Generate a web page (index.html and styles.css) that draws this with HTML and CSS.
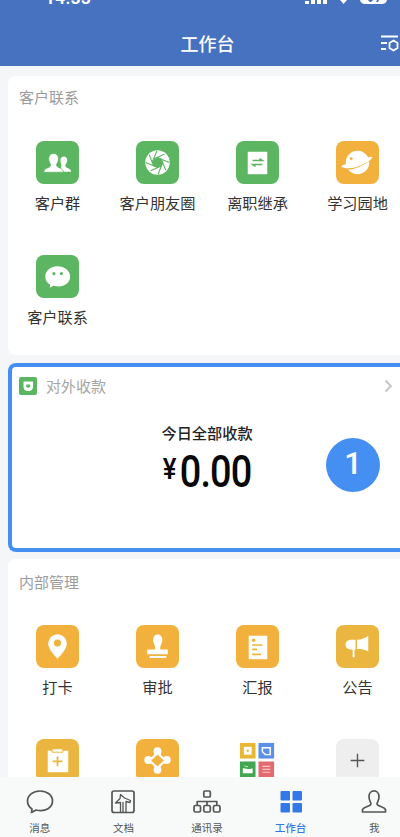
FILE: index.html
```html
<!DOCTYPE html>
<html lang="zh-CN">
<head>
<meta charset="utf-8">
<title>工作台</title>
<link rel="stylesheet" href="styles.css">
</head>
<body>
<div class="app">
  <header class="header">
    <div class="status">
      <span class="time">14:33</span>
      <svg class="signals" width="84" height="6" viewBox="0 0 84 6" fill="#fff"><path d="M0 1h4v3H0zM6 0h4v4H6zM12 0h4v4h-4zM18 0h4v4h-4zM35 0h7l-3.500 4z"/><path d="M55 0h27q-1 4-5 4H60q-4 0-5-4z"/><path d="M63 0h5q-1 2-2.500 2T63 0zM72 0h2l-1 2h-2z" fill="#4672c0"/></svg>
    </div>
    <div class="titlebar">
      <h1 class="title">工作台</h1>
      <svg class="settings" width="20" height="17" viewBox="0 0 20 17" fill="none" stroke="#fff" stroke-width="1.800"><path d="M1 1.500h17M1 8h6M1 14h5"/><path d="M13.500 5.500l4 2.500v5l-4 2.500-4-2.500V8z" stroke-linejoin="round"/></svg>
    </div>
  </header>

  <main class="content">
    <section class="card contacts">
      <h2 class="heading">客户联系</h2>
      <div class="grid">
        <div class="item"><div class="tile green"><svg viewBox="0 0 44 44"><g fill="#fff"><path d="M25 31.500h11c0-4-5-3-6-6 0-2 2-3 2-6 0-5-7-5-7 0 0 3 1 4 1 6z"/><path d="M8 32c0-5 6-4 7-7 0-2-2-3-2-7 0-7 10-7 10 0 0 4-2 5-2 7 1 3 7 2 7 7z" stroke="#5bb561" stroke-width=".8"/></g></svg></div><span>客户群</span></div>
        <div class="item"><div class="tile green"><svg viewBox="0 0 44 44"><circle cx="22" cy="22" r="12.500" fill="#fff"/><path d="M22 17l4 1.500 1.500 4-1.500 3-4 1.500-4-1.500-1.500-4 1.500-3z" fill="#5bb561"/><path d="M18 18.500l11-5M22 17l12 5M26 18.500l4.500 11.500M27.500 22l-5 12M26 25.500l-11 5M22 27l-12-5M18 25.500L13.500 14M16.500 22l5-12" stroke="#5bb561" stroke-width="1.100"/></svg></div><span>客户朋友圈</span></div>
        <div class="item"><div class="tile green"><svg viewBox="0 0 44 44"><path fill="#fff" d="M12 11h20v23H12z"/><path d="M17 20h10l-3-2M27 24H17l3 2" fill="none" stroke="#5bb561" stroke-width="1.600"/></svg></div><span>离职继承</span></div>
        <div class="item"><div class="tile orange"><svg viewBox="0 0 44 44"><circle cx="22" cy="22" r="12" fill="#fff"/><path d="M8 28.500Q20 30 35 19" fill="none" stroke="#f3b03b" stroke-width="1.600"/><path d="M11 23.500c-4 1-6 2-5 3 7 4 24-1 31-9 1-2-2-1.500-6 0-5 4-14 8-20 6z" fill="#fff"/><circle cx="15.500" cy="18" r="1.500" fill="#f3b03b"/></svg></div><span>学习园地</span></div>
        <div class="item"><div class="tile green"><svg viewBox="0 0 44 44"><path d="M22 11.500c-7 0-12.500 4.500-12.500 10.500 0 4 2 6.500 5 8.500l-.5 3 4-2c11 3 17-4 17-9.500 0-6-6-10.500-13-10.500z" fill="#fff"/><circle cx="18.300" cy="19" r="1.600" fill="#5bb561"/><circle cx="26" cy="19" r="1.600" fill="#5bb561"/></svg></div><span>客户联系</span></div>
      </div>
    </section>

    <section class="card payment">
      <div class="payhead">
        <svg width="18" height="18" viewBox="0 0 18 18"><rect width="18" height="18" rx="2" fill="#5bb561"/><path d="M4.500 4.500h9.500v5q0 4.500-4.700 4.500t-4.800-4.500z" fill="#fff"/><path d="M7.200 7.500h4v2q-2 2.500-4 0z" fill="#5bb561"/></svg>
        <h2 class="heading">对外收款</h2>
        <svg class="chevron" width="9" height="14" viewBox="0 0 9 14" fill="none" stroke="#c4c4c4" stroke-width="1.800"><path d="M1.500 1.500L7 7l-5.500 5.500"/></svg>
      </div>
      <div class="paylabel">今日全部收款</div>
      <div class="amount"><span class="yen">¥</span><span class="sum">0.00</span></div>
      <div class="marker">1</div>
    </section>

    <section class="card internal">
      <h2 class="heading">内部管理</h2>
      <div class="grid">
        <div class="item"><div class="tile orange"><svg viewBox="0 0 44 44"><path d="M22 34.500c-4-4-9.500-10-9.500-15.500a9.500 9.500 0 0 1 19 0c0 5.500-5.500 11.500-9.500 15.500z" fill="#fff"/><circle cx="22" cy="18.500" r="3.600" fill="#f0b23c"/></svg></div><span>打卡</span></div>
        <div class="item"><div class="tile orange"><svg viewBox="0 0 44 44" fill="#fff"><path d="M19.500 25c1-4-2-6-2-10 0-7 9.500-7 9.500 0 0 4-3 6-2 10h7.500v5h-21v-5zM14 31.800h17v2H14z"/></svg></div><span>审批</span></div>
        <div class="item"><div class="tile orange"><svg viewBox="0 0 44 44"><path d="M13 11h19v24H13z" fill="#fff"/><circle cx="18" cy="15.500" r="1.800" fill="#f0b23c"/><path d="M16.500 20.500h10.500M16.500 25h5M16.500 30h9" stroke="#f0b23c" stroke-width="1.700"/></svg></div><span>汇报</span></div>
        <div class="item"><div class="tile orange deep"><svg viewBox="0 0 44 44" fill="#fff"><path d="M20 15h-5c-7 0-7 10 0 10h2v8h2v-8h1zM21.500 15c5 0 8-1.500 11.500-4v16c-3.500-2-7-2.500-11.500-2.500z"/></svg></div><span>公告</span></div>
        <div class="item"><div class="tile orange deep"><svg viewBox="0 0 44 44"><path d="M12 12h21v22H12z" fill="#fff"/><path d="M16.500 10h11v3.500h-11z" fill="#fff" stroke="#edb63d"/><path d="M22 18v10M17 23h10" stroke="#edb63d" stroke-width="1.800"/></svg></div></div>
        <div class="item"><div class="tile orange"><svg viewBox="0 0 44 44"><g fill="#fff"><circle cx="22" cy="12.500" r="4"/><circle cx="31.500" cy="21.500" r="4"/><circle cx="22" cy="31.500" r="4"/><circle cx="12.500" cy="21.500" r="4"/></g><path d="M22 14l8.500 8-8.500 8-8.500-8z" fill="#f3b03b" stroke="#fff" stroke-width="2.800"/><path d="M15.500 18l2.500-2.500M26 15.500l2.500 2.500M28.500 26l-2.500 2.500M15.500 26l2.500 2.500" stroke="#f3b03b" stroke-width="1.600"/></svg></div></div>
        <div class="item"><div class="tile"><svg viewBox="0 0 44 44"><path d="M4 4h16v16H4z" fill="#e8b735"/><path d="M23 4h16v16H23z" fill="#5a91e8"/><path d="M4 23h16v16H4z" fill="#43a653"/><path d="M23 23h16v16H23z" fill="#e36b70"/><path d="M8 8h8v8H8z" fill="#fff"/><circle cx="12" cy="12" r="1.200" fill="#e8b735"/><path d="M27 9h8v7h-5l-3-3z" fill="none" stroke="#fff" stroke-width="1.500"/><path d="M7 30l7 1 3-1v5H7zM7 27l5 1v1z" fill="#fff"/><path d="M27 28h8M27 31h8M27 34h8" stroke="#f6c4c5" stroke-width="1.200"/></svg></div></div>
        <div class="item"><div class="tile gray"><svg viewBox="0 0 44 44"><path d="M22 15v14M15 22h14" stroke="#555" stroke-width="1.400"/></svg></div></div>
      </div>
    </section>
  </main>

  <nav class="tabs">
    <div class="tab"><svg viewBox="0 0 28 28"><path d="M14 4C7 4 1.500 8.500 1.500 14c0 4 1.500 6 4.500 8l-.5 3.500L10 23c10 2.500 16.500-3 16.500-9S21 4 14 4z"/></svg><span>消息</span></div>
    <div class="tab"><svg viewBox="0 0 28 28"><rect x="3" y="4" width="22" height="21.500" rx="2"/><path d="M11.500 25v-9.500L6.500 16l4.500-4.500.5-4 4 3.500 6 2.500-.5 2-4-1V25M14 15v10" stroke-width="1.300"/></svg><span>文档</span></div>
    <div class="tab"><svg viewBox="0 0 28 28"><rect x="10.800" y="4" width="6.500" height="6" rx="1"/><rect x="1" y="18.500" width="6.500" height="6.500" rx="1.500"/><rect x="10.800" y="18.500" width="6.500" height="6.500" rx="1.500"/><rect x="20.500" y="18.500" width="6.500" height="6.500" rx="1.500"/><path d="M4.200 18v-3.500h19.600V18M14 14.500V18"/></svg><span>通讯录</span></div>
    <div class="tab active"><svg viewBox="0 0 28 28"><rect x="3.500" y="4" width="9.500" height="9.500" rx="1"/><rect x="15.500" y="4" width="9.500" height="9.500" rx="1"/><rect x="3.500" y="16" width="9.500" height="9.500" rx="1"/><rect x="15.500" y="16" width="9.500" height="9.500" rx="1"/></svg><span>工作台</span></div>
    <div class="tab"><svg viewBox="0 0 28 28"><path d="M2.500 25v-2.500c2-3 8-3 8.500-5.500 0-2-2-3-2-7.500 0-7.500 10-7.500 10 0 0 4.500-2 5.500-2 7.500.5 2.500 6.500 2.500 8.500 5.500V25z"/></svg><span>我</span></div>
  </nav>
</div>
</body>
</html>
```
FILE: styles.css
```css
* { box-sizing: border-box; }
body {
  margin: 0;
  background: #f5f6f8;
  font-family: "Noto Sans CJK SC", sans-serif;
  color: #333;
  overflow: hidden;
}
h1, h2 { margin: 0; font-weight: 400; }
svg { display: block; flex: none; }
.app {
  width: 400px;
  height: 837px;
  overflow: hidden;
  display: flex;
  flex-direction: column;
}
.header { height: 66px; flex: none; background: #4672c0; color: #fff; }
.status {
  height: 20px;
  padding: 0 11px 0 45px;
  display: flex;
  justify-content: space-between;
}
.time {
  font: 700 17px/20px Roboto, sans-serif;
  letter-spacing: .5px;
  margin-top: -12px;
}
.titlebar {
  display: grid;
  grid-template-columns: 1fr auto 1fr;
  align-items: center;
  height: 46px;
  padding-left: 15px;
}
.title { grid-column: 2; font-size: 18px; line-height: 26px; font-weight: 500; }
.settings { justify-self: end; }
.content { height: 711px; flex: none; padding: 10px 0 0 8px; overflow: hidden; }
.card { width: 400px; background: #fff; border-radius: 8px 0 0 8px; }
.heading { font-size: 15px; line-height: 22px; color: #9b9b9b; }
.contacts { height: 279px; padding-top: 10px; }
.contacts > .heading, .internal > .heading { padding-left: 11px; }
.grid {
  display: grid;
  grid-template-columns: repeat(4, 100px);
  grid-auto-rows: 113.5px;
  margin: 33px 0 0 -.5px;
}
.item { display: flex; flex-direction: column; align-items: center; }
.item span { font-size: 15.2px; line-height: 22px; margin-top: 7px; white-space: nowrap; }
.tile { width: 43px; height: 43px; border-radius: 8px; }
.tile svg { width: 100%; height: 100%; }
.green { background: #5bb561; }
.orange { background: #f2b13d; }
.deep { background: #ebb63f; }
.gray { background: #eee; }
.payment {
  position: relative;
  height: 189px;
  margin-top: 8px;
  border: 4px solid #468ff2;
  border-right: 0;
  padding: 8px 8px 0 7px;
}
.payhead { display: flex; align-items: center; height: 22px; }
.payhead .heading { margin-left: 9px; color: #a5a5a5; }
.chevron { margin: 0 7px 0 auto; }
.paylabel {
  width: 376px;
  margin-top: 24px;
  text-align: center;
  font-size: 15.2px;
  line-height: 22px;
  font-weight: 500;
  color: #222;
}
.amount {
  display: flex;
  justify-content: center;
  align-items: flex-start;
  gap: 4px;
  width: 376px;
  color: #080808;
  font-family: Roboto, sans-serif;
  transform: scaleX(.86);
}
.yen { font-size: 30px; line-height: 52px; font-weight: 500; }
.sum { font-size: 44px; line-height: 58px; font-weight: 500; letter-spacing: -1px; }
.marker {
  position: absolute;
  left: 314px;
  top: 71px;
  width: 54px;
  height: 54px;
  border-radius: 50%;
  background: #468ff2;
  color: #fff;
  text-align: center;
  font: 500 31px/51px Roboto, sans-serif;
}
.internal { height: 260px; margin-top: 7px; padding-top: 12px; }
.internal .grid { margin-top: 32px; }
.tabs {
  height: 60px;
  flex: none;
  width: 418px;
  margin-left: -2px;
  display: grid;
  grid-template-columns: repeat(5, 1fr);
  background: #f8faf9;
}
.tab { display: flex; flex-direction: column; align-items: center; padding-top: 10px; }
.tab svg { width: 28px; height: 28px; fill: none; stroke: #555; stroke-width: 1.700; stroke-linejoin: round; }
.tab span { font-size: 10.500px; line-height: 16px; margin-top: 5px; color: #555; }
.active svg { fill: #3478e8; stroke: none; }
.active span { color: #3478e8; font-weight: 500; }
```
